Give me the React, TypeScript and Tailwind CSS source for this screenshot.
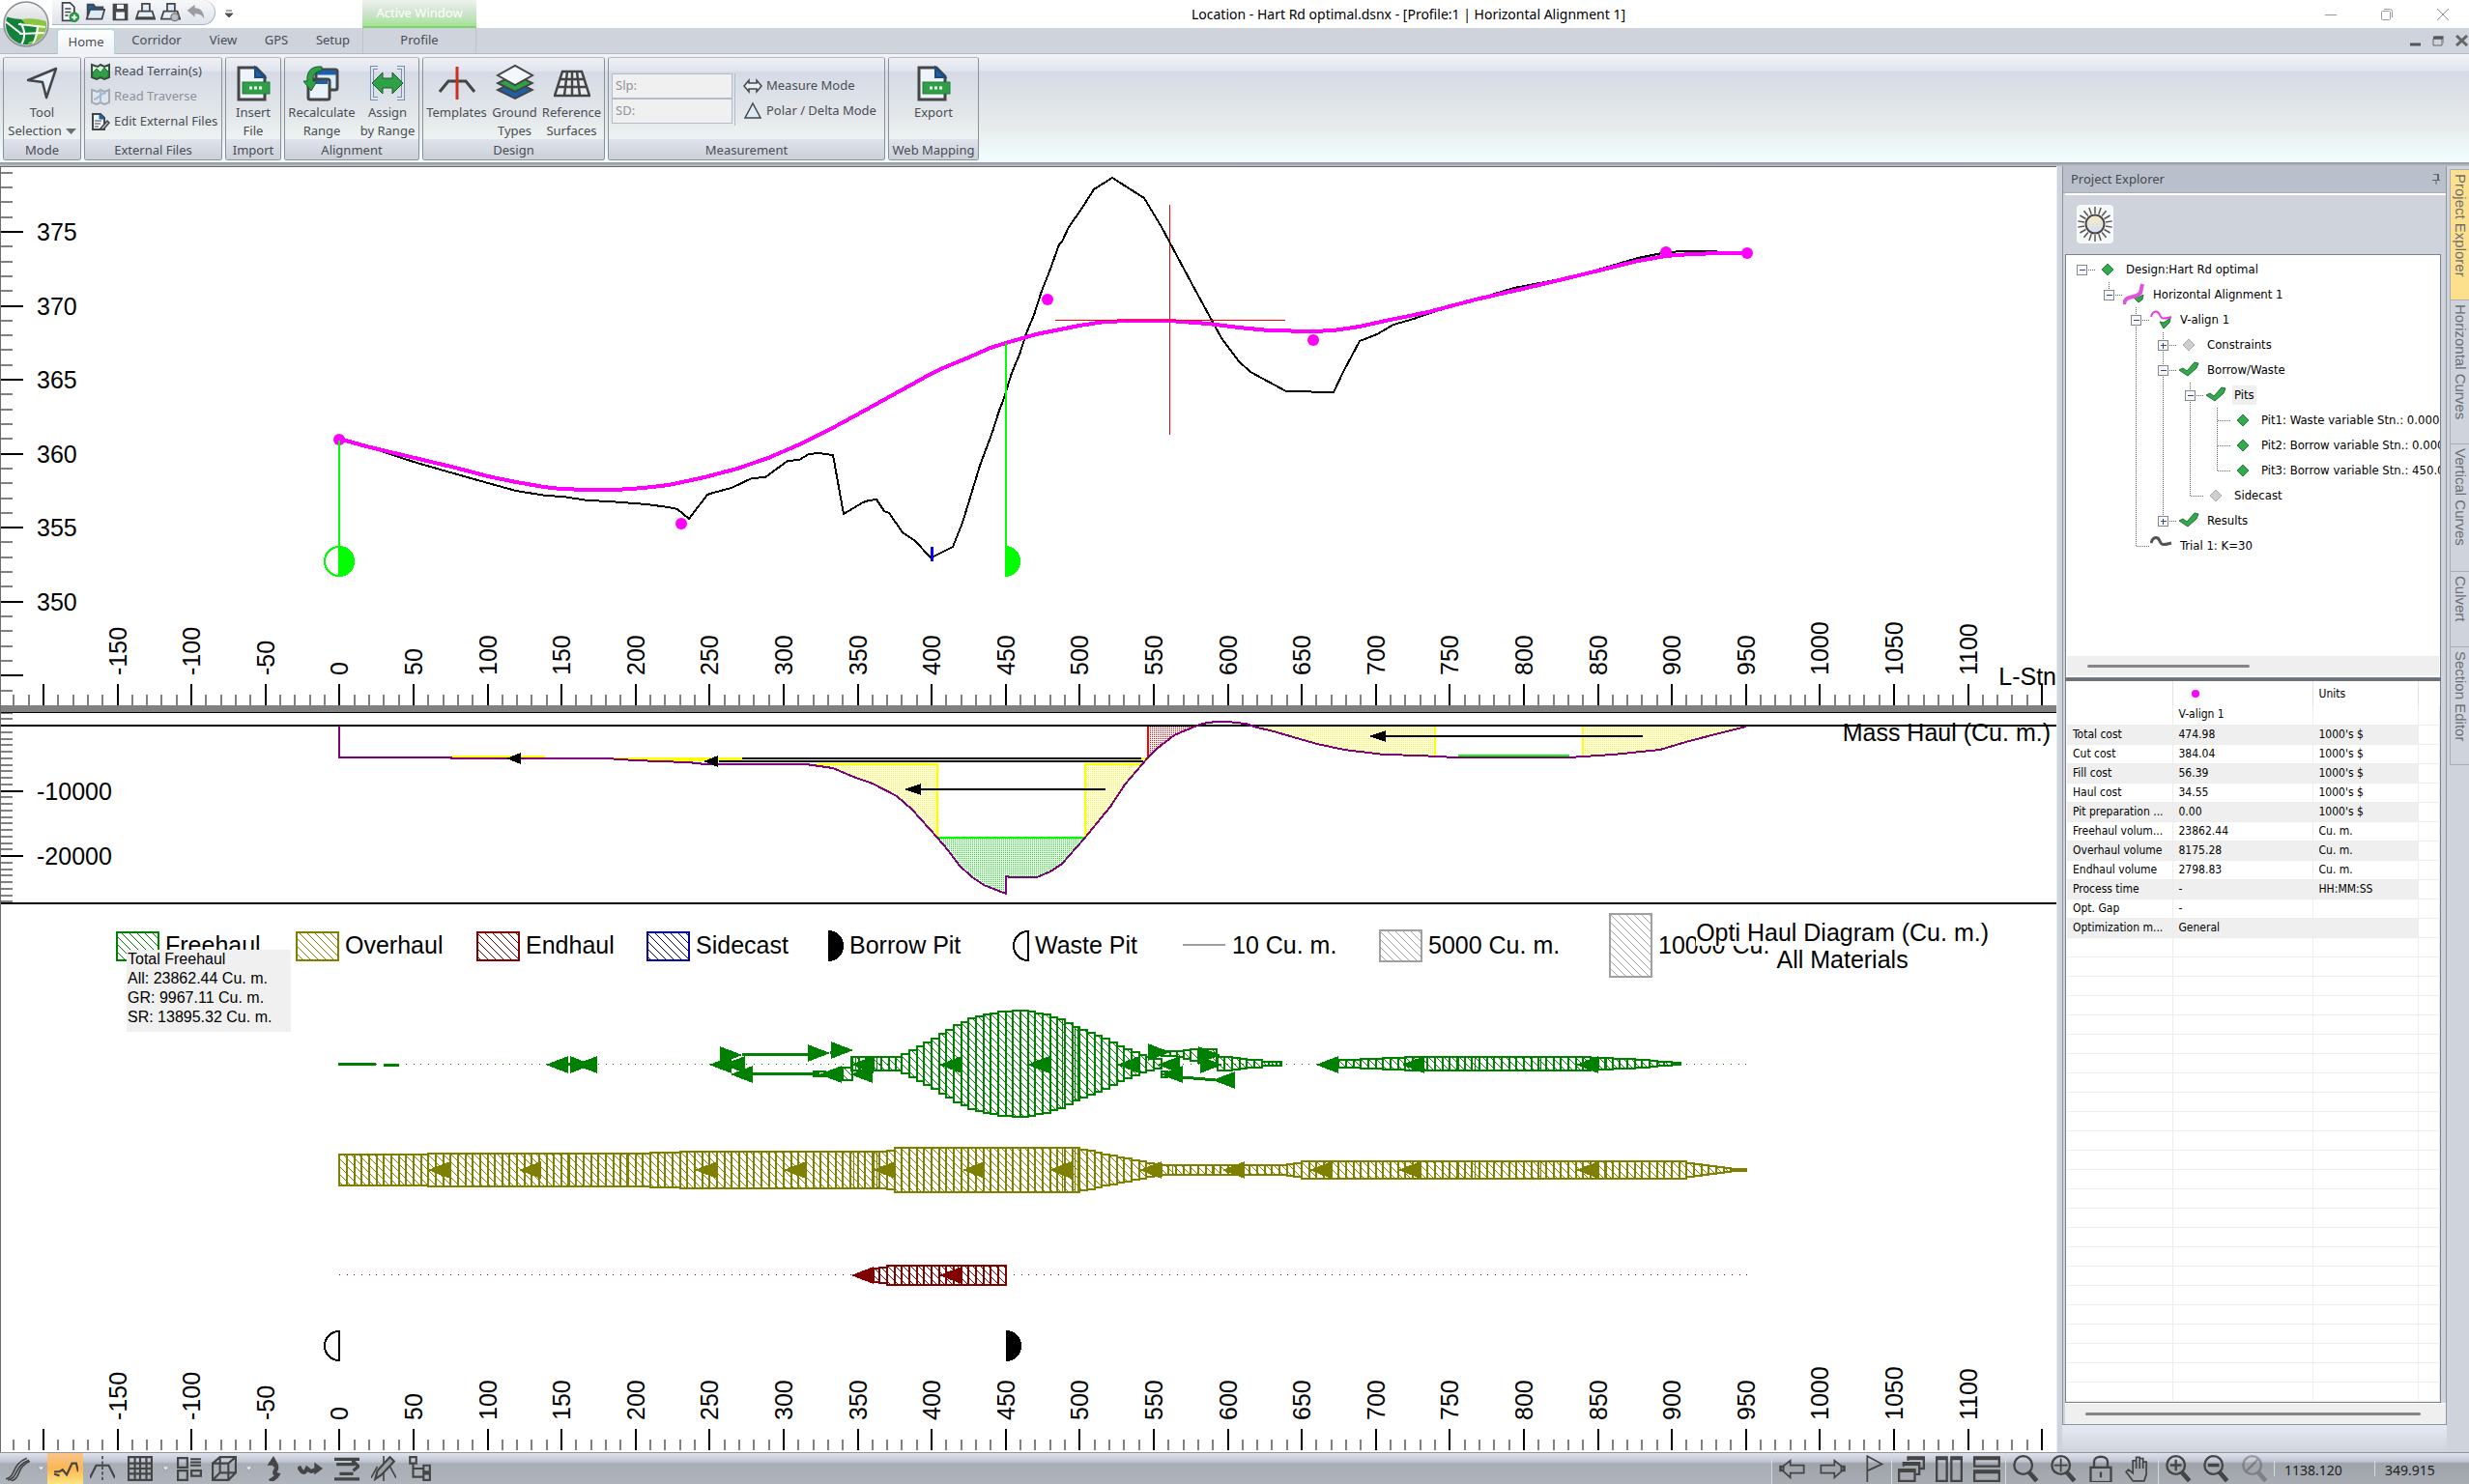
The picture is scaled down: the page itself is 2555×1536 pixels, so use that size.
import React from 'react';
import clsx from 'clsx';

const FONT_UI = "font-['Noto_Sans','Open_Sans',sans-serif]";
const FONT_TREE = "font-['DejaVu_Sans_Condensed','DejaVu_Sans',sans-serif]";
const FONT_CHART = "font-['Liberation_Sans',Arial,sans-serif]";

const GREEN = '#008000';
const OLIVE = '#808000';
const MAROON = '#800000';
const NAVY = '#0000a0';
const GREY = '#a0a0a0';

// station (m) -> x on the canvas
const sx = (st: number) => 351.3 + st * 1.532;
// elevation (m) -> y on the canvas
const ey = (el: number) => 469.6 - (el - 360) * 15.31;

const range = (from: number, to: number, step: number) => {
    const out: number[] = [];
    for (let v = from; v <= to; v += step) out.push(v);
    return out;
};

const TERRAIN =
    '351,454 382,463 428,478 459,487 505,500 534,508 565,513 583,514 608,518 631,519 669,522 692,525 701,527 713,537 732,512 738,510 757,505 778,495 792,494 815,477 827,476 837,470 847,469 862,471 873,532 893,520 899,518 907,517 915,529 920,531 934,551 947,560 963,577 966,576 986,566 996,541 1014,482 1027,447 1034,425 1039,412 1047,386 1055,367 1062,345 1070,326 1078,301 1086,281 1096,253 1099,250 1106,235 1118,218 1132,196 1151,184 1184,205 1202,235 1210,250 1233,293 1264,350 1282,374 1294,385 1331,405 1349,405 1364,406 1380,406 1391,383 1407,353 1425,346 1442,336 1463,330 1483,323 1527,310 1567,298 1630,286 1695,267 1725,261 1744,260 1773,260 1790,262 1808,262';

const VALIGN =
    '351,454 379,462 425,473 471,484 505,493 534,499 563,504 580,506 608,507 637,507 666,505 692,502 729,494 763,485 795,474 832,458 867,440 900,422 956,391 978,380 1000,371 1025,360 1041,355 1072,346 1117,337 1143,333 1170,332 1210,332 1250,335 1282,339 1313,342 1358,343 1380,342 1407,338 1429,333 1478,323 1527,310 1580,298 1630,286 1695,270 1724,265 1750,263 1780,262 1808,262';

const MASS_LEFT = '745,791 834,791 862,795 883,804 903,811 928,824 944,838 970,867';
const MASS_PIT = '970,867 981,880 993,896 1005,907 1018,916 1041,925 1041,907 1046,908 1073,908 1087,902 1099,894 1122,868';
const MASS_RISE = '1122,868 1144,841 1149,835 1164,812 1188,784';
const MASS_FALL = '1301,753 1318,757 1342,764 1363,770 1391,776 1432,781 1470,782 1485,783';
const MASS_END = '1638,783 1669,781 1718,776 1748,767 1779,759 1807,752';

const MASS_HAUL = `351,751 351,784 467,784 467,785 627,785 658,787 681,788 712,789 730,791 ${MASS_LEFT} ${MASS_PIT} ${MASS_RISE} 1197,775 1215,761 1234,753 1244,749 1258,747 1270,747 1289,749 ${MASS_FALL} 1509,784 1624,784 ${MASS_END}`;

type Step = [station: number, half: number];

const FREE_MAIN: Step[] = [
    [346, 7], [380, 10], [385, 14], [390, 18], [395, 22], [400, 26], [405, 31], [410, 35], [415, 40], [420, 43],
    [425, 47], [430, 49], [435, 51], [440, 52], [445, 54], [455, 55], [465, 54], [470, 52], [475, 51], [480, 48],
    [485, 46], [490, 42], [495, 38], [500, 35], [505, 32], [510, 29], [515, 26], [520, 22], [525, 18], [530, 15],
    [535, 12], [540, 9], [545, 7], [550, 5], [555, 5],
];
const FREE_MID: Step[] = [[593, 7], [603, 6], [608, 5], [613, 4], [623, 2], [636, 2]];
const FREE_RIGHT: Step[] = [
    [675, 4], [690, 5], [705, 6], [720, 7], [845, 6], [860, 5], [875, 4], [885, 3], [890, 2], [900, 1], [906, 1],
];
const OVER: Step[] = [
    [0, 16], [60, 17], [210, 18], [230, 19], [370, 20], [375, 23], [500, 21], [505, 20], [510, 18], [515, 16],
    [520, 15], [525, 13], [530, 12], [535, 10], [540, 9], [545, 7], [550, 6], [555, 5], [640, 6], [645, 7],
    [650, 9], [660, 9], [865, 9], [910, 7], [915, 6], [920, 5], [925, 4], [930, 3], [935, 2], [940, 1], [950, 1],
];
const END: Step[] = [[361, 7], [365, 8], [370, 10], [450, 10]];

const FREE_SPLITS = [882, 885, 904, 907, 1033, 1079, 1099, 1112, 1115, 1507, 1509, 1526, 1569, 1594, 1662];
const OVER_SPLITS = [505, 587, 589, 642, 648, 650, 880, 883, 904, 907, 1033, 1079, 1099, 1101, 1112, 1115, 1213, 1256, 1262, 1507, 1509, 1526, 1569, 1594, 1662];

function Haul({ steps, cy, color, hatch }: { steps: Step[]; cy: number; color: string; hatch: string }) {
    const bars: { x: number; w: number; h: number }[] = [];
    for (let i = 0; i < steps.length - 1; i++) {
        const [from, half] = steps[i];
        const to = steps[i + 1][0];
        for (let st = from; st < to; st += 5) {
            const x = Math.round(sx(st));
            bars.push({ x, w: Math.round(sx(Math.min(st + 5, to))) - x, h: half });
        }
    }
    return (
        <g stroke={color} strokeWidth={2} fill={`url(#${hatch})`}>
            {bars.map((b) => (
                <rect key={b.x} x={b.x} y={cy - b.h} width={b.w} height={b.h * 2} />
            ))}
        </g>
    );
}

function Splits({ xs, steps, cy, color }: { xs: number[]; steps: Step[]; cy: number; color: string }) {
    return (
        <g stroke={color} strokeWidth={1}>
            {xs.map((x) => {
                const st = (x - 351.3) / 1.532;
                if (st < steps[0][0] || st > steps[steps.length - 1][0]) return null;
                const half = steps.filter((s) => s[0] <= st).pop()![1];
                return <path key={x} d={`M${x + 0.5} ${cy - half}v${half * 2}`} />;
            })}
        </g>
    );
}

function Head({ x, y, dir = 'left', w = 23, h = 9 }: { x: number; y: number; dir?: 'left' | 'right'; w?: number; h?: number }) {
    const s = dir === 'left' ? 1 : -1;
    return <path d={`M${x} ${y}l${s * w} ${-h}v${h * 2}z`} />;
}

function StationRuler({ bottom }: { bottom: number }) {
    return (
        <>
            <g strokeWidth={2}>
                {range(-220, 1150, 10).map((st) => {
                    const major = st % 50 === 0;
                    return <path key={st} stroke={major ? '#000' : '#808080'} d={`M${Math.round(sx(st))} ${bottom}V${bottom - (major ? 22 : 11)}`} />;
                })}
            </g>
            {range(-150, 1100, 50).map((st) => (
                <text key={st} transform={`translate(${Math.round(sx(st)) + 9} ${bottom - 31}) rotate(-90)`}>
                    {st}
                </text>
            ))}
        </>
    );
}

function ProfileView() {
    return (
        <div className="relative">
            <svg className={clsx('block w-full h-[557px] text-[25px]', FONT_CHART)} shapeRendering="crispEdges">
                <g transform="translate(-1 -173)">
                    <g strokeWidth={2}>
                        {range(344, 379, 1).map((el) => (
                            <path key={el} stroke={el % 5 ? '#808080' : '#000'} d={`M0 ${Math.round(ey(el))}H${el % 5 ? 13 : 24}`} />
                        ))}
                    </g>
                    {range(350, 375, 5).map((el) => (
                        <text key={el} x={38} y={Math.round(ey(el)) + 9}>{el}</text>
                    ))}
                    <StationRuler bottom={730} />

                    <path d="M1210.5 212V450" stroke="#f00" fill="none" />
                    <polyline points={TERRAIN} fill="none" stroke="#000" strokeWidth={2} />
                    <polyline points={VALIGN} fill="none" stroke="#f0f" strokeWidth={4} />
                    <path d="M1092 331.5H1330" stroke="#f00" fill="none" />
                    <g fill="#f0f" shapeRendering="auto">
                        <circle cx={351} cy={455} r={6} />
                        <circle cx={705} cy={542} r={6} />
                        <circle cx={1084} cy={310} r={6} />
                        <circle cx={1359} cy={352} r={6} />
                        <circle cx={1724} cy={261} r={6} />
                        <circle cx={1808} cy={262} r={6} />
                    </g>
                    <path d="M351 456V596M1041 355V596" stroke="#0f0" strokeWidth={2} />
                    <circle cx={351} cy={581} r={15} fill="none" stroke="#0f0" strokeWidth={2} />
                    <path d="M351 565a16 16 0 0 1 0 32zM1040 565a16 16 0 0 1 0 32z" fill="#0f0" />
                    <path d="M964.5 566V581" stroke="#00f" strokeWidth={3} />
                </g>
            </svg>
            <span className={clsx('absolute right-0 bottom-4 text-[25px] leading-7', FONT_CHART)}>L-Stn</span>
        </div>
    );
}

function MassHaulView() {
    return (
        <div className="relative">
            <svg className={clsx('block w-full h-[198px] text-[25px]', FONT_CHART)} shapeRendering="crispEdges">
                <defs>
                    {[['dotY', '#ff0'], ['dotG', '#0f0'], ['dotR', '#f00']].map(([id, c]) => (
                        <pattern key={id} id={id} width={2} height={2} patternUnits="userSpaceOnUse">
                            <rect width={1} height={1} fill={c} />
                        </pattern>
                    ))}
                </defs>
                <g transform="translate(-1 -738)">
                    <g strokeWidth={2}>
                        {range(-2, 27, 1).map((k) => (
                            <path key={k} stroke={k > 0 && k % 10 === 0 ? '#000' : '#808080'} d={`M0 ${Math.round(751 + k * 6.75)}H${k > 0 && k % 10 === 0 ? 24 : 13}`} />
                        ))}
                    </g>
                    <text x={38} y={828}>-10000</text>
                    <text x={38} y={895}>-20000</text>

                    <polygon points={`${MASS_LEFT} 970,791`} fill="url(#dotY)" />
                    <polygon points={`${MASS_RISE} 1122,791`} fill="url(#dotY)" />
                    <polygon points={MASS_PIT} fill="url(#dotG)" />
                    <polygon points="1188,751 1188,784 1197,775 1215,761 1234,752" fill="url(#dotR)" />
                    <polygon points={`${MASS_FALL} 1485,751 1298,751`} fill="url(#dotY)" />
                    <polygon points={`1638,751 ${MASS_END}`} fill="url(#dotY)" />

                    <g fill="none" stroke="#ff0" strokeWidth={2}>
                        <path d="M467 783H564M627 785H768M658 787H768M1181 785H1189" />
                        <path d="M845 791H970V867M1183 791H1123V867M1485 751V782M1638 751V782" />
                    </g>
                    <path d="M970 867H1122M1509 782H1624" stroke="#0f0" strokeWidth={2} />
                    <path d="M1188 751V785" stroke="#f00" strokeWidth={2} />
                    <path d="M0 751H2400" stroke="#000" strokeWidth={2} />
                    <polyline points={MASS_HAUL} fill="none" stroke="#800080" strokeWidth={2} />
                    <path d="M0 935H2400M768 785H1181M744 788H1183M953 817H1144M1434 762H1700" stroke="#000" strokeWidth={2} />
                    <Head x={524} y={785} w={15} h={6} />
                    <Head x={728} y={788} w={15} h={6} />
                    <Head x={935} y={817} w={18} h={6} />
                    <Head x={1416} y={762} w={18} h={6} />
                </g>
            </svg>
            <span className={clsx('absolute right-1.5 top-1.5 text-[25px] leading-7', FONT_CHART)}>Mass Haul (Cu. m.)</span>
        </div>
    );
}

const hatches = [
    ['hGreen', GREEN],
    ['hOlive', OLIVE],
    ['hMaroon', MAROON],
    ['hNavy', NAVY],
    ['hGrey', GREY],
];

const swatches = [
    { x: 121, y: 965, h: 29, hatch: 'hGreen', color: GREEN, label: 'Freehaul' },
    { x: 307, y: 965, h: 29, hatch: 'hOlive', color: OLIVE, label: 'Overhaul' },
    { x: 494, y: 965, h: 29, hatch: 'hMaroon', color: MAROON, label: 'Endhaul' },
    { x: 670, y: 965, h: 29, hatch: 'hNavy', color: NAVY, label: 'Sidecast' },
    { x: 1428, y: 963, h: 32, hatch: 'hGrey', color: GREY, label: '5000 Cu. m.' },
    { x: 1666, y: 946, h: 65, hatch: 'hGrey', color: GREY, label: '10000 Cu. m.' },
];

function OptiHaulView() {
    return (
        <div className="relative flex-1">
            <svg className={clsx('block w-full h-[566px] text-[25px]', FONT_CHART)} shapeRendering="crispEdges">
                <defs>
                    {hatches.map(([id, c]) => (
                        <pattern key={id} id={id} width={8} height={8} patternUnits="userSpaceOnUse">
                            <path d="M-1 -1L9 9" stroke={c} strokeWidth={1} />
                        </pattern>
                    ))}
                </defs>
                <g transform="translate(-1 -936)">
                    {swatches.map((s) => (
                        <g key={s.label}>
                            <rect x={s.x} y={s.y} width={43} height={s.h} fill={`url(#${s.hatch})`} stroke={s.color} strokeWidth={2} />
                            <text x={s.x + 50} y={987}>{s.label}</text>
                        </g>
                    ))}
                    <path d="M857 963a16 16 0 0 1 0 32z" />
                    <text x={879} y={987}>Borrow Pit</text>
                    <path d="M1064 964a15 15 0 0 0 0 30z" fill="none" stroke="#000" strokeWidth={2} />
                    <text x={1071} y={987}>Waste Pit</text>
                    <path d="M1224 978H1268" stroke={GREY} strokeWidth={2} />
                    <text x={1275} y={987}>10 Cu. m.</text>

                    {/* Freehaul */}
                    <path d="M351 1101.500H1808" stroke={GREEN} strokeDasharray="1 6.66" />
                    <path d="M350 1101.500H389M397 1102H413" stroke={GREEN} strokeWidth={3} />
                    <Haul steps={FREE_MAIN} cy={1101} color={GREEN} hatch="hGreen" />
                    <Haul steps={FREE_MID} cy={1101} color={GREEN} hatch="hGreen" />
                    <Haul steps={FREE_RIGHT} cy={1101} color={GREEN} hatch="hGreen" />
                    <Splits xs={FREE_SPLITS} steps={FREE_MAIN} cy={1101} color={GREEN} />
                    <Splits xs={FREE_SPLITS} steps={FREE_RIGHT} cy={1101} color={GREEN} />
                    <g fill="url(#hGreen)" stroke={GREEN} strokeWidth={2}>
                        <rect x={842} y={1109} width={12} height={5} />
                        <rect x={872} y={1105} width={10} height={13} />
                        <rect x={1202} y={1088} width={9} height={5} />
                        <rect x={1211} y={1088} width={7} height={5} />
                        <rect x={1218} y={1088} width={7} height={6} />
                        <rect x={1225} y={1087} width={7} height={9} />
                        <rect x={1232} y={1086} width={8} height={12} />
                        <rect x={1240} y={1086} width={19} height={14} />
                        <rect x={1202} y={1109} width={6} height={6} />
                    </g>
                    <g fill="none" stroke={GREEN} strokeWidth={3}>
                        <path d="M768 1092L782 1091H836M859 1089H863M779 1111H848M1224 1115L1258 1118M580 1101H602" />
                    </g>
                    <g fill={GREEN}>
                        <Head x={565} y={1102} />
                        <Head x={613} y={1102} dir="right" />
                        <Head x={595} y={1102} />
                        <Head x={768} y={1092} dir="right" />
                        <Head x={734} y={1102} />
                        <Head x={748} y={1102} />
                        <Head x={756} y={1112} />
                        <Head x={859} y={1090} dir="right" />
                        <Head x={883} y={1087} dir="right" />
                        <Head x={848} y={1112} />
                        <Head x={880} y={1112} />
                        <Head x={881} y={1102} />
                        <Head x={972} y={1102} />
                        <Head x={1063} y={1102} />
                        <Head x={1156} y={1102} />
                        <Head x={1211} y={1089} dir="right" />
                        <Head x={1198} y={1102} />
                        <Head x={1201} y={1112} />
                        <Head x={1255} y={1118} />
                        <Head x={1263} y={1092} dir="right" />
                        <Head x={1265} y={1102} dir="right" />
                        <Head x={1362} y={1102} />
                        <Head x={1451} y={1102} />
                        <Head x={1631} y={1102} />
                    </g>

                    {/* Overhaul */}
                    <Haul steps={OVER} cy={1211} color={OLIVE} hatch="hOlive" />
                    <Splits xs={OVER_SPLITS} steps={OVER} cy={1211} color={OLIVE} />
                    <g fill={OLIVE}>
                        {[443, 537, 719, 811, 903, 996, 1086, 1179, 1265, 1355, 1447, 1631].map((x) => (
                            <Head key={x} x={x} y={1211} />
                        ))}
                    </g>

                    {/* Endhaul */}
                    <path d="M351 1319.500H882M1049 1319.500H1808" stroke={MAROON} strokeDasharray="1 6.66" />
                    <Haul steps={END} cy={1320} color={MAROON} hatch="hMaroon" />
                    <g fill={MAROON}>
                        <Head x={881} y={1320} />
                        <Head x={972} y={1320} />
                    </g>

                    <path d="M351 1378a15 15 0 0 0 0 30z" fill="none" stroke="#000" strokeWidth={2} />
                    <path d="M1041 1377a16 16 0 0 1 0 32z" />
                    <StationRuler bottom={1501} />
                </g>
            </svg>
            <div className={clsx('absolute top-[15px] right-[70px] flex flex-col items-center text-[25px] leading-7', FONT_CHART)}>
                <span className="bg-white">Opti Haul Diagram (Cu. m.)</span>
                <span className="bg-white">All Materials</span>
            </div>
            <div className={clsx('absolute left-[130px] top-[47px] w-[170px] h-[85px] bg-[#f0f0f0] text-[16px] leading-5 pl-px', FONT_CHART)}>
                <p>Total Freehaul</p>
                <p>All: 23862.44 Cu. m.</p>
                <p>GR: 9967.11 Cu. m.</p>
                <p>SR: 13895.32 Cu. m.</p>
            </div>
        </div>
    );
}

/* ---------- icons ---------- */

function Ico({ size = 24, box = 24, children, className }: { size?: number; box?: number; children: React.ReactNode; className?: string }) {
    return (
        <svg width={size} height={size} viewBox={`0 0 ${box} ${box}`} fill="none" stroke="#454545" strokeWidth={2} className={clsx('shrink-0', className)} aria-hidden="true">
            {children}
        </svg>
    );
}

const DocIcon = () => (
    <Ico size={38} box={38}>
        <path d="M4 3h18l9 9v24H4z" fill="#eef4fb" strokeWidth={3} />
        <path d="M21 3v10h10z" fill="#1f5fa5" stroke="#1d4c80" />
        <rect x={8} y={18} width={28} height={12} fill="#2fa046" stroke="#1f7c34" strokeWidth={1} />
        <path d="M15 24h3M20 24h3M25 24h3" stroke="#fff" strokeWidth={3} />
    </Ico>
);

const CursorIcon = () => (
    <Ico size={38} box={38}>
        <path d="M4 16L33 4L23 34L19 18z" fill="#e6eef8" strokeWidth={2.500} strokeLinejoin="round" />
    </Ico>
);

const RecalcIcon = () => (
    <Ico size={40} box={40}>
        <rect x={14} y={6} width={22} height={21} rx={2} fill="#dcebfa" strokeWidth={3} />
        <path d="M15 9h20" stroke="#1f5fa5" strokeWidth={5} />
        <rect x={6} y={16} width={22} height={21} rx={2} fill="#eaf3fc" strokeWidth={3} />
        <path d="M8 19h18" stroke="#1f5fa5" strokeWidth={4} />
        <path d="M20 3C9 2 4 8 5 18H1l8 10 6-10h-4c-1-6 2-10 9-11z" fill="#2fa046" stroke="#1a5a2b" strokeWidth={1} />
    </Ico>
);

const AssignIcon = () => (
    <Ico size={38} box={38}>
        <path d="M9 3H3v32h6M29 3h6v32h-6" stroke="#7d8fa6" strokeWidth={4} />
        <path d="M9 3H3v32h6M29 3h6v32h-6" stroke="#dbe7f4" strokeWidth={2} />
        <path d="M3 19l11-11v6h10V8l11 11-11 11v-6H14v6z" fill="#2fa046" stroke="#1a5a2b" strokeWidth={1} />
    </Ico>
);

const TemplateIcon = () => (
    <Ico size={38} box={38}>
        <path d="M1 28L10 17H28L37 28" strokeWidth={3} />
        <path d="M19 2v34" stroke="#c8321e" strokeWidth={3} />
    </Ico>
);

const LayersIcon = () => (
    <Ico size={40} box={40}>
        <path d="M2 27l18 9 18-9-18-9z" fill="#1f5fa5" />
        <path d="M2 20l18 9 18-9-18-9z" fill="#2fa046" />
        <path d="M2 12l18 10 18-10L20 2z" fill="#f4f8fd" />
    </Ico>
);

const SurfaceIcon = () => (
    <Ico size={38} box={38}>
        <path d="M9 7h20l8 25H1zM6 15h26M4 23h30M14 7l-3 25M19 7v25M24 7l3 25" fill="#e9ecef" strokeWidth={2.500} />
    </Ico>
);

const TerrainIcon = ({ faded = false }: { faded?: boolean }) => (
    <Ico size={20} box={20} className={faded ? 'opacity-60' : undefined}>
        <path d="M1 3l6 2 3-2 4 2 5-2v13l-5 2-4-2-4 2-5-2z" fill={faded ? '#dfe8f2' : '#d8efdc'} stroke={faded ? '#7b8794' : '#3a4a3f'} />
        {faded ? <path d="M3 13c5 0 5-6 13-7M10 3v13" stroke="#7fa0cc" /> : <path d="M2 11l4-4 4 4 4-5 4 4v5l-4 2-4-2-4 2-4-2z" fill="#2fa046" stroke="#1f7c34" strokeWidth={1} />}
    </Ico>
);

const EditFilesIcon = () => (
    <Ico size={20} box={20}>
        <path d="M2 2h8l4 4v12H2z" fill="#eef4fb" />
        <path d="M9 2v5h5" fill="#1f5fa5" stroke="#1f5fa5" strokeWidth={1} />
        <path d="M4 9h7M4 12h6M4 15h4" strokeWidth={1} />
        <path d="M10 17l7-8 2 2-6 7z" fill="#bfc7d0" strokeWidth={1.500} />
    </Ico>
);

const OrbLogo = () => (
    <svg width={50} height={50} viewBox="0 0 50 50" aria-hidden="true">
        <defs>
            <linearGradient id="orb" x1="0" y1="0" x2="0" y2="1">
                <stop offset="0" stopColor="#f7f7f7" />
                <stop offset="1" stopColor="#b9bcc0" />
            </linearGradient>
            <clipPath id="orbClip"><circle cx="25" cy="25" r="21" /></clipPath>
        </defs>
        <circle cx="25" cy="25" r="23" fill="url(#orb)" stroke="#8b8f94" strokeWidth="1.500" />
        <g clipPath="url(#orbClip)">
            <path d="M2 16c12 6 28 2 48 10v8L28 50C10 46 2 36 2 16z" fill="#12813a" />
            <path d="M20 20c10-2 20 0 28 3l-4 18-18 8c4-10 4-18-6-29z" fill="#8cc63f" />
            <path d="M18 25l18 2-3 15-14 4 4-10z" fill="#12813a" />
            <path d="M17 25l28 3M18 35l26-1M19 24c5 6 6 16 0 24M37 26c0 7-2 14-5 20M2 21l18 14" stroke="#fff" strokeWidth="2" fill="none" />
        </g>
    </svg>
);

const quickIcons: { name: string; icon: React.ReactNode }[] = [
    { name: 'New', icon: <><path d="M3 1h9l5 5v16H3z" fill="#f4f8fd" /><path d="M6 8h7M6 12h7M6 16h4" strokeWidth={1.500} /><circle cx={17} cy={18} r={5.500} fill="#2fa046" stroke="#1f7c34" strokeWidth={1} /><path d="M14 18h6M17 15v6" stroke="#fff" /></> },
    { name: 'Open', icon: <><path d="M3 20V3h7l2 3h9v4" fill="#1f5fa5" /><path d="M2 20l4-11h17l-3 11z" fill="#dcebfa" /></> },
    { name: 'Save', icon: <><path d="M4 3h16v18H4z" fill="#4a4a4a" /><path d="M8 3h8v5H8zM7 12h10v8H7z" fill="#f4f8fd" stroke="none" /></> },
    { name: 'Print', icon: <><path d="M8 12V2h9v10" fill="#dcebfa" /><path d="M4 11L1 20h22l-3-9z" fill="#e8eef6" /><path d="M2 19h20" strokeWidth={3} /></> },
    { name: 'Print Setup', icon: <><path d="M8 12V2h9v10" fill="#dcebfa" /><path d="M4 11L1 20h22l-3-9z" fill="#e8eef6" /><circle cx={17} cy={18} r={4.500} fill="#b8bec6" stroke="#777" strokeWidth={1.500} /></> },
    { name: 'Undo', icon: <path d="M2 10l9-7v4c7 0 11 5 11 13-3-5-6-6-11-6v4z" fill="#9a9da2" stroke="none" /> },
];

/* ---------- ribbon ---------- */

function Group({ label, className, children }: { label: string; className: string; children: React.ReactNode }) {
    return (
        <section className={clsx('flex flex-col h-[107px] rounded-[3px] border border-[#8c9098] border-t-[#b5b9c2] overflow-hidden', className)}>
            <div className="flex-1 min-h-0 flex justify-center bg-[linear-gradient(#eef0f6,#e0e4ee_14px,#d5dae6_14px,#e3e7ea_60px,#eef3f2)]">{children}</div>
            <h2 className="h-[21px] shrink-0 text-center text-[13px] leading-[22px] bg-linear-to-b from-[#e0e3eb] to-[#cbd0d9]">{label}</h2>
        </section>
    );
}

function BigButton({ icon, lines, className, arrow }: { icon: React.ReactNode; lines: string[]; className?: string; arrow?: boolean }) {
    return (
        <button className={clsx('self-start flex flex-col items-center pt-1 text-[13px] leading-[19px] whitespace-nowrap', className)}>
            <span className="h-[43px] flex items-center">{icon}</span>
            {lines.map((l, i) => (
                <span key={l} className="flex items-center gap-1">
                    {l}
                    {arrow && i === lines.length - 1 && (
                        <svg width={11} height={6} aria-hidden="true"><path d="M0 0h11L5.500 6z" fill="#6b6f76" /></svg>
                    )}
                </span>
            ))}
        </button>
    );
}

function SmallButton({ icon, label, disabled }: { icon: React.ReactNode; label: string; disabled?: boolean }) {
    return (
        <button disabled={disabled} className={clsx('flex items-center gap-1 h-[26px] text-[13px] whitespace-nowrap', disabled && 'text-[#8e9299]')}>
            {icon}
            {label}
        </button>
    );
}

function TitleBar() {
    return (
        <header className="relative h-[29px] flex items-center bg-white">
            <div className="ml-[54px] w-[169px] h-[26px] self-start flex items-center gap-[2px] pl-1.5 rounded-r-full border border-t-0 border-l-0 border-[#a9b4c4] bg-linear-to-b from-[#f7f8fa] to-[#dfe4ec]">
                {quickIcons.map((q) => (
                    <button key={q.name} aria-label={q.name} className="w-6 h-6 flex items-center justify-center">
                        <Ico size={21}>{q.icon}</Ico>
                    </button>
                ))}
            </div>
            <button aria-label="Customize" className="ml-2.5">
                <svg width={8} height={9}><path d="M1 1h6M0 4h8L4 8z" fill="#555" stroke="#555" /></svg>
            </button>
            <div className="ml-[134px] w-[118px] h-[29px] flex items-center justify-center text-[13px] text-white border-b-2 border-[#7ed36f] bg-linear-to-b from-[#eef3ee] via-[#cfe3cf] to-[#a4e394]">
                Active Window
            </div>
            <h1 className="absolute inset-x-0 mx-auto w-fit pl-[360px] text-[14px] leading-7 text-black whitespace-nowrap">
                Location - Hart Rd optimal.dsnx - [Profile:1 | Horizontal Alignment 1]
            </h1>
            <div className="relative ml-auto flex gap-[46px] mr-[21px] text-[#8a8a8a]">
                <button aria-label="Minimize"><svg width={12} height={12}><path d="M0 6.500h12" stroke="#999" /></svg></button>
                <button aria-label="Restore"><svg width={12} height={12} fill="none" stroke="#999"><rect x={0.500} y={2.500} width={9} height={9} rx={1} /><path d="M3 .5h6.500a2 2 0 0 1 2 2V9" /></svg></button>
                <button aria-label="Close"><svg width={12} height={12}><path d="M0 0l12 12M12 0L0 12" stroke="#888" /></svg></button>
            </div>
        </header>
    );
}

const tabs = [
    { label: 'Corridor', cls: 'w-[86px]' },
    { label: 'View', cls: 'w-[52px]' },
    { label: 'GPS', cls: 'w-[58px]' },
    { label: 'Setup', cls: 'w-[59px]' },
];

function TabRow() {
    return (
        <nav className="flex h-[27px] pl-[59px] bg-[#ced3dc] text-[13px] border-b border-[#b4b9c3]">
            <button className="w-[60px] mt-px h-[26px] rounded-t border border-b-0 border-[#a8dcd8] bg-linear-to-b from-white to-[#eef1f6]">Home</button>
            {tabs.map((t) => (
                <button key={t.label} className={t.cls}>{t.label}</button>
            ))}
            <button className="ml-[1px] w-[118px] border-x border-[#bcc3cc]">Profile</button>
            <div className="ml-auto flex items-center gap-3 pr-px">
                <button aria-label="Minimize view"><svg width={11} height={12}><path d="M0 10h11" stroke="#555" strokeWidth={3} /></svg></button>
                <button aria-label="Restore view"><svg width={12} height={12} fill="none"><path d="M1 4h9v7H1zM3 2h9v7" stroke="#666" /><path d="M1 3h10" stroke="#555" strokeWidth={3} /></svg></button>
                <button aria-label="Close view"><svg width={13} height={12}><path d="M1 1l11 10M12 1L1 11" stroke="#666" strokeWidth={3} /></svg></button>
            </div>
        </nav>
    );
}

function Ribbon() {
    return (
        <div className="h-[112px] flex gap-[3px] pl-[3px] pt-[3px] bg-[linear-gradient(#f3f4f9,#e0e4ee_17px,#d5dae6_18px,#e7ebea_75px,#effbfd_104px,#f4fcfd)]">
            <Group label="Mode" className="w-[81px]">
                <BigButton icon={<CursorIcon />} lines={['Tool', 'Selection']} arrow />
            </Group>
            <Group label="External Files" className="w-[143px]">
                <div className="w-full pl-1.5 pt-px">
                    <SmallButton icon={<TerrainIcon />} label="Read Terrain(s)" />
                    <SmallButton icon={<TerrainIcon faded />} label="Read Traverse" disabled />
                    <SmallButton icon={<EditFilesIcon />} label="Edit External Files" />
                </div>
            </Group>
            <Group label="Import" className="w-[58px]">
                <BigButton icon={<DocIcon />} lines={['Insert', 'File']} />
            </Group>
            <Group label="Alignment" className="w-[140px]">
                <BigButton icon={<RecalcIcon />} lines={['Recalculate', 'Range']} className="w-[74px]" />
                <BigButton icon={<AssignIcon />} lines={['Assign', 'by Range']} className="w-[62px]" />
            </Group>
            <Group label="Design" className="w-[189px]">
                <BigButton icon={<TemplateIcon />} lines={['Templates']} className="w-[66px]" />
                <BigButton icon={<LayersIcon />} lines={['Ground', 'Types']} className="w-[54px]" />
                <BigButton icon={<SurfaceIcon />} lines={['Reference', 'Surfaces']} className="w-[64px]" />
            </Group>
            <Group label="Measurement" className="w-[287px]">
                <div className="w-full flex pl-[3px] pt-4">
                    <div className="w-[125px] h-[52px] flex flex-col">
                        {['Slp:', 'SD:'].map((l) => (
                            <label key={l} className="flex h-[26px] items-center pl-[3px] border border-[#b3bccb] bg-[#f0f0f0] text-[13px] text-[#8e9299]">
                                {l}
                                <input className="w-20 ml-1 bg-transparent outline-none" />
                            </label>
                        ))}
                    </div>
                    <div className="ml-0.5 mr-2 h-[54px] border-l border-[#b3bccb]" />
                    <div>
                        <SmallButton label="Measure Mode" icon={<Ico size={20} box={20}><path d="M1 10l5-6v3h8V4l5 6-5 6v-3H6v3z" fill="#e9f0f8" strokeWidth={1.500} /></Ico>} />
                        <SmallButton label="Polar / Delta Mode" icon={<Ico size={20} box={20}><path d="M10 2L18 17H2z" fill="#dcebfa" strokeWidth={1.500} /></Ico>} />
                    </div>
                </div>
            </Group>
            <Group label="Web Mapping" className="w-[94px]">
                <BigButton icon={<DocIcon />} lines={['Export']} />
            </Group>
        </div>
    );
}

/* ---------- project explorer ---------- */

type NodeIcon = 'on' | 'off' | 'check' | 'halign' | 'valign' | 'trial';

interface TreeRow {
    label: string;
    level: number;
    icon: NodeIcon;
    box?: '+' | '-';
    last?: boolean;
    guides?: number[];
    selected?: boolean;
}

const rows: TreeRow[] = [
    { label: 'Design:Hart Rd optimal', level: 0, icon: 'on', box: '-', last: true },
    { label: 'Horizontal Alignment 1', level: 1, icon: 'halign', box: '-', last: true },
    { label: 'V-align 1', level: 2, icon: 'valign', box: '-' },
    { label: 'Constraints', level: 3, icon: 'off', box: '+', guides: [2] },
    { label: 'Borrow/Waste', level: 3, icon: 'check', box: '-', guides: [2] },
    { label: 'Pits', level: 4, icon: 'check', box: '-', guides: [2, 3], selected: true },
    { label: 'Pit1: Waste variable Stn.: 0.000', level: 5, icon: 'on', guides: [2, 3, 4] },
    { label: 'Pit2: Borrow variable Stn.: 0.000', level: 5, icon: 'on', guides: [2, 3, 4] },
    { label: 'Pit3: Borrow variable Stn.: 450.000', level: 5, icon: 'on', last: true, guides: [2, 3, 4] },
    { label: 'Sidecast', level: 4, icon: 'off', last: true, guides: [2, 3] },
    { label: 'Results', level: 3, icon: 'check', box: '+', last: true, guides: [2] },
    { label: 'Trial 1: K=30', level: 2, icon: 'trial', last: true },
];

function TreeIcon({ icon }: { icon: NodeIcon }) {
    const wave = 'M1 9C3 2 8 2 10 7s4 4 12 2';
    return (
        <svg width={24} height={24} viewBox="0 0 24 24" fill="none" className="shrink-0" aria-hidden="true">
            {icon === 'on' && <path d="M12 6l6 6-6 6-6-6z" fill="#34a84c" stroke="#23833a" />}
            {icon === 'off' && <path d="M12 6l6 6-6 6-6-6z" fill="#cfcfcf" stroke="#a9a9a9" />}
            {icon === 'check' && <path d="M2 12l4-2 4 3 8-9 4 1-2 5-9 8z" fill="#34a84c" stroke="#1f6e33" />}
            {icon === 'halign' && <><path d="M11 15l3-2 2 2 5-3-1 5-4 3z" fill="#34a84c" stroke="#1f6e33" /><path d="M1 22c1-11 12-5 17-12l2-9" stroke="#dd55dd" strokeWidth={4} /></>}
            {icon === 'valign' && <><path d="M10 14l4 1 7-5-1 5-6 6z" fill="#34a84c" stroke="#1f6e33" /><path d={wave} stroke="#e43fe4" strokeWidth={2} /></>}
            {icon === 'trial' && <path d={wave} stroke="#555" strokeWidth={3} />}
        </svg>
    );
}

function TreeLine({ row }: { row: TreeRow }) {
    return (
        <li className="flex items-center h-[26px] pl-[3px] whitespace-nowrap">
            {range(0, row.level - 1, 1).map((i) => (
                <svg key={i} width={28} height={26} className="shrink-0" aria-hidden="true">
                    {row.guides?.includes(i) && <path d="M13.500 0V26" stroke="#666" strokeDasharray="1 1" />}
                </svg>
            ))}
            <svg width={28} height={26} fill="none" className="shrink-0" aria-hidden="true" shapeRendering="crispEdges">
                <path d={`M13.500 ${row.level ? 0 : 13}V${row.last ? 13 : 26}M13.500 13.500H28`} stroke="#666" strokeDasharray="1 1" />
                {row.box && <><rect x={8.500} y={8.500} width={10} height={10} rx={1} fill="#f7f7f7" stroke="#888" /><path d={row.box === '+' ? 'M11 13.500h6M13.500 11v6' : 'M11 13.500h6'} stroke="#2b4a8f" /></>}
            </svg>
            <TreeIcon icon={row.icon} />
            <button className={clsx('ml-[5px] px-[2px] h-5', row.selected && 'bg-[#efefef]')}>{row.label}</button>
        </li>
    );
}

const costs = [
    ['Total cost', '474.98', "1000's $"],
    ['Cut cost', '384.04', "1000's $"],
    ['Fill cost', '56.39', "1000's $"],
    ['Haul cost', '34.55', "1000's $"],
    ['Pit preparation ...', '0.00', "1000's $"],
    ['Freehaul volum...', '23862.44', 'Cu. m.'],
    ['Overhaul volume', '8175.28', 'Cu. m.'],
    ['Endhaul volume', '2798.83', 'Cu. m.'],
    ['Process time', '-', 'HH:MM:SS'],
    ['Opt. Gap', '-', ''],
    ['Optimization m...', 'General', ''],
];

function CostTable() {
    return (
        <table className="w-full table-fixed text-left">
            <colgroup>
                <col className="w-[109px]" />
                <col className="w-[145px]" />
                <col className="w-[109px]" />
                <col />
            </colgroup>
            <thead>
                <tr className="h-[25px] *:border-r *:border-[#e2e2e2] *:font-normal">
                    <th />
                    <th className="pl-[19px]"><svg width={8} height={8}><circle cx={4} cy={4} r={4} fill="#f0f" /></svg></th>
                    <th className="pl-1.5">Units</th>
                    <th className="border-r-0!" />
                </tr>
            </thead>
            <tbody className="[&_td]:border-r [&_td]:border-b [&_td]:border-[#ededed] [&_td]:h-5 [&_td]:pl-1.5 [&_td]:leading-[19px] [&_td]:whitespace-nowrap">
                <tr><td /><td>V-align 1</td><td /><td /></tr>
                {costs.map((c, i) => (
                    <tr key={c[0]} className={i % 2 ? '' : '*:not-last:bg-[#efefef]'}>
                        <td>{c[0]}</td><td>{c[1]}</td><td>{c[2]}</td><td />
                    </tr>
                ))}
                {range(1, 24, 1).map((i) => (
                    <tr key={i}><td /><td /><td /><td /></tr>
                ))}
            </tbody>
        </table>
    );
}

function ProjectExplorer() {
    return (
        <aside className="w-[398px] flex-1 flex flex-col border border-t-0 border-[#8e939c] bg-[#ced3dc]">
            <div className="h-[28px] flex items-center justify-between pl-2 pr-1.5 text-[13px] text-[#45494f] bg-[#b9c0cb] border-b border-[#a7adb7]">
                Project Explorer
                <button aria-label="Pin"><svg width={8} height={11} fill="none" stroke="#666"><path d="M1.500 .5h5v6M0 6.500h8M4 7v4M5.500 1v5" /></svg></button>
            </div>
            <div className="flex-1 flex flex-col ml-[2px] border-t-2 border-white">
                <div className="h-[61px] pl-3 pt-2.5">
                    <button aria-label="Lighting" className="w-[38px] h-10 rounded bg-[#f7f8f8] flex items-center justify-center">
                        <svg width={36} height={38} viewBox="0 0 36 38">
                            <defs>
                                <linearGradient id="sun" x1="0" y1="0" x2="0" y2="1"><stop offset="0" stopColor="#fdebc3" /><stop offset="1" stopColor="#cfe0f5" /></linearGradient>
                            </defs>
                            {range(0, 345, 20).map((a) => (
                                <path key={a} d="M18 1v7" transform={`rotate(${a} 18 19)`} stroke="#555" strokeWidth={1.500} />
                            ))}
                            <circle cx={18} cy={19} r={9.500} fill="url(#sun)" stroke="#444" strokeWidth={2} />
                        </svg>
                    </button>
                </div>
                <div className={clsx('mr-[5px] h-[439px] flex flex-col border border-[#7d8188] bg-white text-[13px] text-black overflow-hidden', FONT_TREE)}>
                    <ul className="flex-1 pt-[2px]">
                        {rows.map((r) => <TreeLine key={r.label} row={r} />)}
                    </ul>
                    <div className="h-5 mb-[2px] mx-px bg-[#efefef] flex items-center">
                        <div className="ml-[21px] w-[168px] h-[3px] rounded bg-[#858585]" />
                    </div>
                </div>
                <div className="h-[3px] mr-[5px] bg-[#6c7078]" />
                <div className={clsx('mr-[5px] flex-1 basis-0 overflow-hidden pl-px border-x border-b border-[#7d8188] bg-white text-[12px] text-black', FONT_TREE)}>
                    <CostTable />
                </div>
                <div className="h-[22px] flex items-center bg-[#efefef] border-t border-white">
                    <div className="ml-[21px] w-[347px] h-[3px] rounded bg-[#858585]" />
                </div>
            </div>
        </aside>
    );
}

const sideTabs = [
    { label: 'Horizontal Curves', cls: 'h-[149px]' },
    { label: 'Vertical Curves', cls: 'h-[132px]' },
    { label: 'Culvert', cls: 'h-[78px]' },
    { label: 'Section Editor', cls: 'h-[122px]' },
];

function SideTabs() {
    return (
        <div className={clsx('ml-[3px] pt-[3px] w-5 flex flex-col text-[15px] leading-[18px] text-[#6a6e76] whitespace-nowrap', FONT_CHART)}>
            <button className="h-[136px] pt-1 text-left [writing-mode:vertical-rl] border border-r-0 border-[#a9aeb8] bg-[#fde08d]">Project Explorer</button>
            {sideTabs.map((t) => (
                <button key={t.label} className={clsx('pt-1 text-left [writing-mode:vertical-rl] border border-t-0 border-r-0 border-[#a9aeb8]', t.cls)}>{t.label}</button>
            ))}
        </div>
    );
}

/* ---------- status bar ---------- */

const leftTools: { name: string; cls: string; icon: React.ReactNode; menu?: boolean; active?: boolean }[] = [
    { name: 'Plan', cls: 'w-[35px]', icon: <><path d="M1 22c10-2 5-14 20-20M6 24c10-3 5-14 18-19M3 23c10-2 6-14 20-19" strokeWidth={1.500} /></>, menu: true },
    { name: 'Profile', cls: 'w-[37px]', icon: <path d="M1 15h5l3-2 4 5 5-11h4l2 8M1 17l5 2" strokeWidth={2} />, active: true },
    { name: 'Section', cls: 'w-[40px]', icon: <><path d="M0 21L6 9h12l6 12" /><path d="M12 0v24" strokeDasharray="3 2" strokeWidth={1.500} /></> },
    { name: 'Data', cls: 'w-[38px]', icon: <path d="M1 1h22v22H1zM1 7h22M1 12h22M1 17h22M7 1v22M12 1v22M18 1v22" />, menu: true },
    { name: 'Multi-Plot', cls: 'w-[36px]', icon: <path d="M1 2h9v9H1zM1 14h9v9H1zM13 3h10M13 6h10M13 9h10M14 14h9v5h-9z" /> },
    { name: '3D', cls: 'w-[36px]', icon: <path d="M1 7h15v16H1zM1 7l7-6h15v15l-7 7M16 7l7-6M8 1v15h15M8 16l-7 7" strokeWidth={2} />, menu: true },
    { name: 'Curve up', cls: 'w-[38px]', icon: <><path d="M12 8c8 4-4 8 4 10-2 4-6 4-7 6" strokeWidth={4} /><path d="M12 0L6 9h11z" fill="#454545" stroke="none" /></> },
    { name: 'Curve right', cls: 'w-[38px]', icon: <><path d="M1 10c4 8 6 6 8 2 3 2 3 4 8 1" strokeWidth={4} /><path d="M24 12l-8-6v12z" fill="#454545" stroke="none" /></> },
    { name: 'Switch', cls: 'w-[38px]', icon: <path d="M0 3h24M0 22h24M2 8h16v-3l5 5-5 4M18 17H5" strokeWidth={3} /> },
    { name: 'Sketch', cls: 'w-[38px]', icon: <><path d="M0 21L6 10M18 10l6 11M12 0v24" strokeWidth={1.500} /><path d="M4 22l2-8L18 1l4 4L10 18z" fill="#9aa0a8" /></> },
    { name: 'Tree', cls: 'w-[36px]', icon: <path d="M3 1h6v6H3zM16 9h6v6h-6zM16 17h6v6h-6zM6 7v13h10M6 12h10" /> },
];

const lens = <><circle cx={10} cy={9} r={8} /><path d="M15 15l7 8" strokeWidth={4} /></>;

const rightGroups: { cls: string; items: { name: string; icon: React.ReactNode; dim?: boolean }[] }[] = [
    {
        cls: 'w-[124px]',
        items: [
            { name: 'Previous', icon: <path d="M1 12l9-7v4h12v7H10v4zM1 10h3v4H1z" strokeWidth={1.500} /> },
            { name: 'Next', icon: <path d="M23 12l-9-7v4H2v7h12v4zM20 10h3v4h-3z" strokeWidth={1.500} /> },
            { name: 'Flag', icon: <path d="M8 24V1l13 7-13 6" strokeWidth={1.500} /> },
        ],
    },
    {
        cls: 'w-[118px]',
        items: [
            { name: 'Cascade', icon: <><path d="M9 5V2h14v10h-3M5 10V7h14v10h-3" /><path d="M1 13h14v10H1z" /><path d="M9 3h14M5 8h14M1 14h14" strokeWidth={3} /></> },
            { name: 'Tile vertical', icon: <><path d="M1 2h9v21H1zM14 2h9v21h-9z" /><path d="M1 3h9M14 3h9" strokeWidth={3} /></> },
            { name: 'Tile horizontal', icon: <><path d="M1 2h22v8H1zM1 14h22v9H1z" /><path d="M1 3h22M1 15h22" strokeWidth={3} /></> },
        ],
    },
    {
        cls: 'w-[158px]',
        items: [
            { name: 'Zoom', icon: lens },
            { name: 'Zoom extents', icon: <>{lens}<path d="M10 3v12M4 9h12" strokeWidth={1.500} /></> },
            { name: 'Lock', icon: <><rect x={3} y={11} width={18} height={13} /><path d="M6 11V6c0-6 12-6 12 0v5M12 15v5" /></> },
            { name: 'Pan', icon: <path d="M7 23L1 15l2-2 4 3V5h3v7V2h3v10V3h3v9V6h3v11l-2 6z" strokeWidth={1.500} /> },
        ],
    },
    {
        cls: 'w-[120px]',
        items: [
            { name: 'Zoom in', icon: <>{lens}<path d="M10 4v10M5 9h10" /></> },
            { name: 'Zoom out', icon: <>{lens}<path d="M5 9h10" strokeWidth={3} /></> },
            { name: 'Zoom previous', icon: <>{lens}<path d="M5 14L15 4" /></>, dim: true },
        ],
    },
];

function StatusBar() {
    return (
        <footer className="h-[33px] flex items-center border-t border-[#8f949d] bg-[linear-gradient(#e0e3ec,#bfc3d2_9px,#a7adb5_11px,#b0b5bd)]">
            {leftTools.map((t) => (
                <React.Fragment key={t.name}>
                    <button aria-label={t.name} className={clsx('h-full flex items-center justify-center', t.cls, t.active && 'bg-linear-to-b from-[#f7c48c] via-[#fdb64f] to-[#fde481]')}>
                        <Ico size={26}>{t.icon}</Ico>
                    </button>
                    {t.menu && (
                        <button aria-label={`${t.name} menu`} className="w-3.5 flex justify-center">
                            <svg width={7} height={4}><path d="M0 0h7L3.500 4z" fill="#eee" stroke="#777" strokeWidth={0.500} /></svg>
                        </button>
                    )}
                </React.Fragment>
            ))}
            <div className="ml-auto flex h-full bg-[linear-gradient(transparent_9px,#9fa4ab_11px,#a9adb3)]">
                {rightGroups.map((g) => (
                    <div key={g.items[0].name} className={clsx('flex items-center justify-around border-l border-[#d5d8dd]', g.cls)}>
                        {g.items.map((it) => (
                            <button key={it.name} aria-label={it.name} className={it.dim ? 'opacity-40' : undefined}>
                                <Ico size={28}>{it.icon}</Ico>
                            </button>
                        ))}
                    </div>
                ))}
                <span className="my-2 w-[104px] pl-2.5 border-l border-[#d5d8dd] text-[14px] leading-5 text-[#222]">1138.120</span>
                <span className="my-2 w-[98px] pl-2.5 border-l border-[#d5d8dd] text-[14px] leading-5 text-[#222]">349.915</span>
            </div>
        </footer>
    );
}

export default function App() {
    return (
        <div className={clsx('min-h-screen flex flex-col bg-[#ced3dc] text-[#4a4d53] overflow-hidden', FONT_UI)}>
            <div className="relative">
                <TitleBar />
                <TabRow />
                <button aria-label="Application menu" className="absolute left-[2px] top-0"><OrbLogo /></button>
            </div>
            <Ribbon />
            <div className="h-1 bg-linear-to-b from-[#8f939b] to-[#bfc3cc]" />
            <div className="flex-1 flex">
                <main className="flex-1 min-w-0 flex flex-col bg-white text-black border-l border-t border-[#6b6b6b]">
                    <ProfileView />
                    <div className="h-2 bg-[#808080] border-b border-black" />
                    <MassHaulView />
                    <OptiHaulView />
                </main>
                <div className="w-[6px] border-l border-[#e8ebf0]" />
                <div className="flex flex-col">
                    <ProjectExplorer />
                    <div className="h-7 bg-linear-to-b from-[#e5eaf4] to-[#ced3dc]" />
                </div>
                <SideTabs />
            </div>
            <StatusBar />
        </div>
    );
}
